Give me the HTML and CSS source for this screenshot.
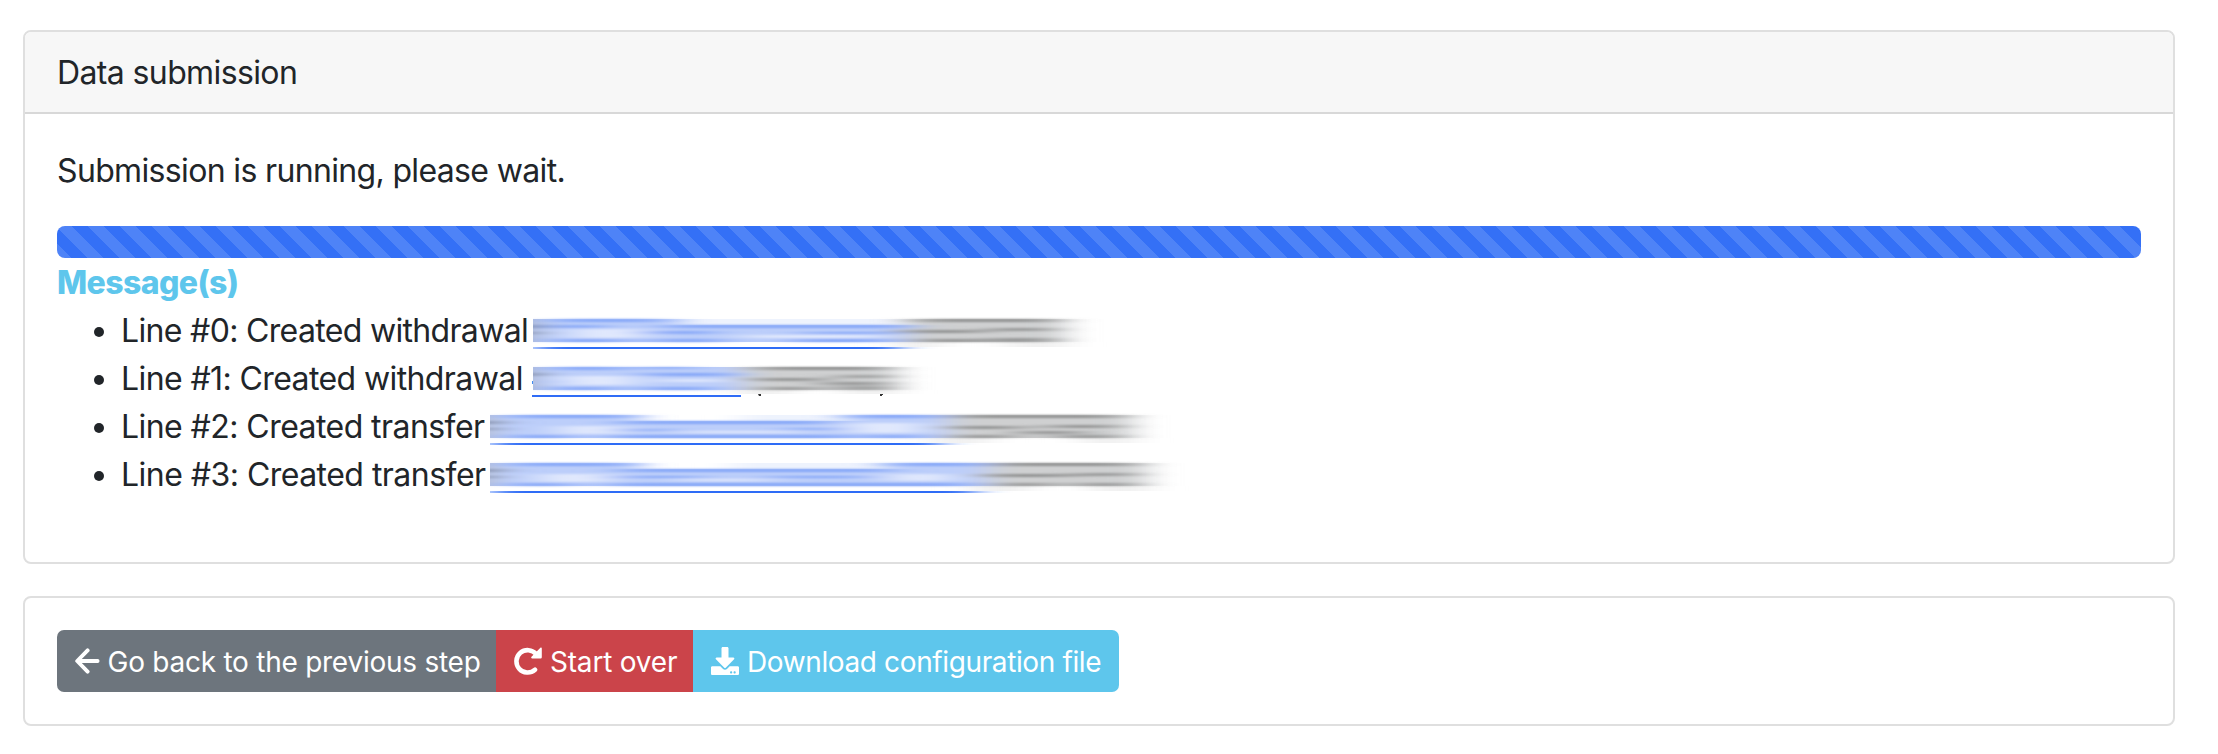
FILE: index.html
```
<!DOCTYPE html>
<html lang="en">
<head>
<meta charset="utf-8">
<title>Data submission</title>
<link rel="stylesheet" href="styles.css">
</head>
<body>
<svg class="defs" width="0" height="0" aria-hidden="true">
  <defs>
    <filter id="smear" filterUnits="userSpaceOnUse" x="-60" y="0" width="820" height="48">
      <feGaussianBlur stdDeviation="16 0.5"/>
    </filter>
    <filter id="streak" filterUnits="userSpaceOnUse" x="-60" y="0" width="820" height="48">
      <feGaussianBlur stdDeviation="20 1"/>
    </filter>
    <clipPath id="edge"><rect x="0" y="0" width="760" height="48"/></clipPath>
  </defs>
</svg>
<main class="page">
  <section class="card">
    <header class="card-header"><span class="title">Data submission</span></header>
    <div class="card-body">
      <p class="status">Submission is running, please wait.</p>
      <div class="progress"><div class="progress-bar"></div></div>
      <strong class="messages-title">Message(s)</strong>
      <ul class="messages">
        <li><div class="row"><span class="label withdrawal">Line #0: Created withdrawal</span>
          <svg class="smudge" width="600" height="48" viewBox="0 0 600 48"><g clip-path="url(#edge)">
            <g filter="url(#smear)">
              <path fill="#bccefa" d="M-60 19H378V36H-60z"/><path fill="#bccefa" d="M-60 13H150V19H-60z"/>
              <path fill="#eef3fd" d="M150 13H370V19H150z"/>
              <path fill="#a9b2c8" d="M-60 13H2V36H-60z"/>
              <path fill="#cfd0d1" d="M372 13H532V36H372z"/>
              <path fill="#f1f1f1" d="M360 36H410V41H360zM470 36H535V41H470z"/>
              <path fill="#2f6cf6" d="M4 41H366V43H4z"/>
            </g>
            <g filter="url(#streak)">
              <path fill="#84a6f8" d="M20 13H130V16H20zM130 19H375V22H130zM90 25H180V28H90zM20 19H70V22H20zM270 26H360V28H270zM20 33H90V36H20zM120 33H190V36H120zM260 33H355V36H260z"/>
              <path fill="#e3eafd" d="M40 23H110V32H40zM210 29H350V32H210z"/>
              <path fill="#909191" d="M385 13H520V16H385zM370 24H450V27H370zM460 22H515V25H460zM385 33H450V36H385zM460 32H515V36H460z"/>
              <path fill="#7f8ba8" d="M-60 19H5V22H-60zM-60 26H5V28H-60z"/>
            </g>
          </g></svg></div></li>
        <li><div class="row"><span class="label withdrawal line-1">Line #1: Created withdrawal</span>
          <svg class="smudge" width="600" height="48" viewBox="0 0 600 48"><g clip-path="url(#edge)">
            <g filter="url(#smear)">
              <path fill="#bccefa" d="M-60 13H212V36H-60z"/>
              <path fill="#a9b2c8" d="M-60 13H2V36H-60z"/>
              <path fill="#cfd0d1" d="M208 13H364V36H208z"/>
              <path fill="#f1f1f1" d="M200 36H260V40H200zM310 36H366V40H310z"/>
            </g>
            <g filter="url(#streak)">
              <path fill="#84a6f8" d="M20 13H90V16H20zM110 13H160V15H110zM110 19H200V22H110zM20 27H60V29H20zM20 33H80V36H20zM110 33H180V36H110z"/>
              <path fill="#e3eafd" d="M30 22H100V31H30zM130 25H190V28H130z"/>
              <path fill="#909191" d="M225 13H350V16H225zM220 24H290V27H220zM310 21H350V24H310zM290 28H350V31H290zM230 33H280V36H230zM310 32H350V36H310z"/>
              <path fill="#7f8ba8" d="M-60 19H5V22H-60z"/>
            </g></g>
            <path fill="#2f6cf6" d="M-1 41H208V43H-1z"/><path fill="#3f8bf0" d="M-1 27H0V30H-1z"/>
            <path fill="#333" d="M225 40H228V42H226zM347 40H350V41H349V42H347z"/>
          </svg></div></li>
        <li><div class="row"><span class="label transfer">Line #2: Created transfer</span>
          <svg class="smudge" width="700" height="48" viewBox="0 0 700 48"><g clip-path="url(#edge)">
            <g filter="url(#smear)">
              <path fill="#bccefa" d="M-60 19H460V36H-60zM-60 13H150V19H-60zM355 13H460V19H355z"/>
              <path fill="#eef3fd" d="M250 13H355V19H250z"/>
              <path fill="#b4bbcb" d="M-60 13H2V36H-60z"/>
              <path fill="#cfd0d1" d="M456 13H642V36H456z"/>
              <path fill="#f1f1f1" d="M440 36H500V41H440zM590 36H645V41H590z"/>
              <path fill="#2f6cf6" d="M4 41H450V43H4z"/>
            </g>
            <g filter="url(#streak)">
              <path fill="#84a6f8" d="M20 13H140V16H20zM130 19H340V22H130zM110 27H180V29H110zM300 26H350V28H300zM20 33H80V36H20zM120 33H360V36H120zM360 13H445V16H360zM380 33H430V36H380z"/>
              <path fill="#e3eafd" d="M70 24H130V32H70zM190 29H310V31H190zM360 21H430V31H360z"/>
              <path fill="#909191" d="M465 13H628V16H465zM460 24H530V27H460zM560 23H625V26H560zM530 29H590V32H530zM465 33H520V36H465zM570 33H625V36H570z"/>
              <path fill="#7f8ba8" d="M-60 19H8V22H-60zM-60 26H5V28H-60z"/>
            </g>
          </g></svg></div></li>
        <li><div class="row"><span class="label transfer line-3">Line #3: Created transfer</span>
          <svg class="smudge" width="700" height="48" viewBox="0 0 700 48"><g clip-path="url(#edge)">
            <g filter="url(#smear)">
              <path fill="#bccefa" d="M-60 19H500V36H-60zM-60 13H150V19H-60zM395 13H500V19H395z"/>
              <path fill="#eef3fd" d="M240 13H395V19H240z"/>
              <path fill="#b4bbcb" d="M-60 13H2V36H-60z"/>
              <path fill="#cfd0d1" d="M496 13H656V36H496z"/>
              <path fill="#f1f1f1" d="M480 36H540V41H480zM600 36H660V41H600z"/>
              <path fill="#2f6cf6" d="M4 41H484V43H4z"/>
            </g>
            <g filter="url(#streak)">
              <path fill="#84a6f8" d="M20 13H140V16H20zM130 19H400V22H130zM110 26H210V28H110zM280 26H380V28H280zM20 33H80V36H20zM120 33H480V36H120zM400 13H490V16H400z"/>
              <path fill="#e3eafd" d="M50 24H120V32H50zM190 29H280V31H190zM400 24H460V31H400z"/>
              <path fill="#909191" d="M505 13H642V16H505zM495 24H580V27H495zM590 23H640V26H590zM510 33H560V36H510zM590 33H640V36H590z"/>
              <path fill="#7f8ba8" d="M-60 19H8V22H-60zM-60 26H5V28H-60z"/>
            </g>
          </g></svg></div></li>
      </ul>
    </div>
  </section>
  <section class="card actions">
    <div class="btn-group">
      <a class="btn btn-secondary"><svg class="icon" width="24.5" height="28" viewBox="0 0 24.5 28"><path fill="none" stroke="#fff" stroke-width="3.9" stroke-linecap="round" stroke-linejoin="round" d="M12.6 3.4 2.2 14 12.6 24.6M2.8 14H22.6"/></svg><span>Go back to the previous step</span></a>
      <a class="btn btn-danger"><svg class="icon" width="28" height="28" viewBox="0 0 28 28"><path fill="none" stroke="#fff" stroke-width="4.6" stroke-linecap="round" d="M22.2 7.1A11.2 11.2 0 1 0 21 22.8"/><path fill="#fff" d="M26.4 .8c.7-.6 1.4-.3 1.4.6V10.300q0 1.200-1.200 1.200H18.200c-1 0-1.400-1-.7-1.700z"/></svg><span>Start over</span></a>
      <a class="btn btn-info"><svg class="icon" width="28" height="28" viewBox="0 0 512 512"><path fill="#fff" d="M216 0h80c13.300 0 24 10.700 24 24v168h87.700c17.800 0 26.700 21.500 14.100 34.100L269.700 378.300c-7.500 7.500-19.800 7.500-27.300 0L90.100 226.100c-12.600-12.600-3.700-34.100 14.100-34.100H192V24c0-13.300 10.700-24 24-24zm296 376v112c0 13.300-10.700 24-24 24H24c-13.300 0-24-10.700-24-24V376c0-13.300 10.700-24 24-24h146.700l49 49c20.100 20.100 52.500 20.100 72.600 0l49-49H488c13.300 0 24 10.700 24 24zm-124 88c0-11-9-20-20-20s-20 9-20 20 9 20 20 20 20-9 20-20zm64 0c0-11-9-20-20-20s-20 9-20 20 9 20 20 20 20-9 20-20z"/></svg><span>Download configuration file</span></a>
    </div>
  </section>
</main>
</body>
</html>
```
FILE: styles.css
```
* { box-sizing: border-box; }
body {
  margin: 0;
  background: #fff;
  color: #212529;
  font-family: Inter, "Liberation Sans", sans-serif;
  font-size: 32px;
  line-height: 48px;
}
.defs { display: block; }
.page { padding: 30px 43px 28px 23px; }
.card {
  overflow: hidden;
  margin-bottom: 32px;
  border: 2px solid #dfdfdf;
  border-radius: 8px;
}
.card-header {
  height: 82px;
  padding: 17px 32px 15px;
  background: #f7f7f7;
  border-bottom: 2px solid #d8d8d8;
}
.title { letter-spacing: -0.62px; }
.card-body { padding: 32px; }
.status {
  margin: 0 0 32px;
  padding-top: 1px;
  height: 48px;
  letter-spacing: -0.65px;
}
.progress {
  height: 32px;
  overflow: hidden;
  border-radius: 8px;
  background: #e9ecef;
}
.progress-bar {
  width: 100%;
  height: 100%;
  background-color: #3470f6;
  background-image: linear-gradient(45deg, rgba(255, 255, 255, .13) 25%, transparent 25%, transparent 50%, rgba(255, 255, 255, .13) 50%, rgba(255, 255, 255, .13) 75%, transparent 75%, transparent);
  background-size: 32px 32px;
  background-position: -2px 0;
}
.messages-title {
  display: block;
  height: 48px;
  padding-top: 1px;
  color: #5ec6ec;
  font-weight: 800;
  letter-spacing: -0.6px;
}
.messages { margin: 0 0 32px; padding-left: 64px; }
.messages li { height: 48px; }
.row { display: flex; height: 48px; }
.label { flex: none; padding-top: 1px; white-space: nowrap; }
.withdrawal { width: 412px; letter-spacing: -0.67px; }
.line-1 { letter-spacing: -0.6px; }
.transfer { width: 369px; letter-spacing: -0.56px; }
.line-3 { letter-spacing: -0.53px; }
.smudge { flex: none; display: block; overflow: visible; }
.actions { margin-bottom: 0; padding: 32px; }
.btn-group { display: flex; }
.btn {
  display: flex;
  align-items: center;
  gap: 8px;
  height: 62px;
  padding: 0 18px;
  color: #fff;
  font-size: 28px;
  line-height: 42px;
  white-space: nowrap;
}
.btn span { padding-top: 2px; }
.btn + .btn { margin-left: -2px; }
.icon { flex: none; display: block; }
.btn-secondary { width: 441px; border-radius: 7px 0 0 7px; background: #6d757d; letter-spacing: -0.25px; }
.btn-danger { width: 199px; background: #cb444a; letter-spacing: -0.2px; }
.btn-info { width: 426px; border-radius: 0 7px 7px 0; background: #5ec6ec; letter-spacing: -0.38px; }
```
